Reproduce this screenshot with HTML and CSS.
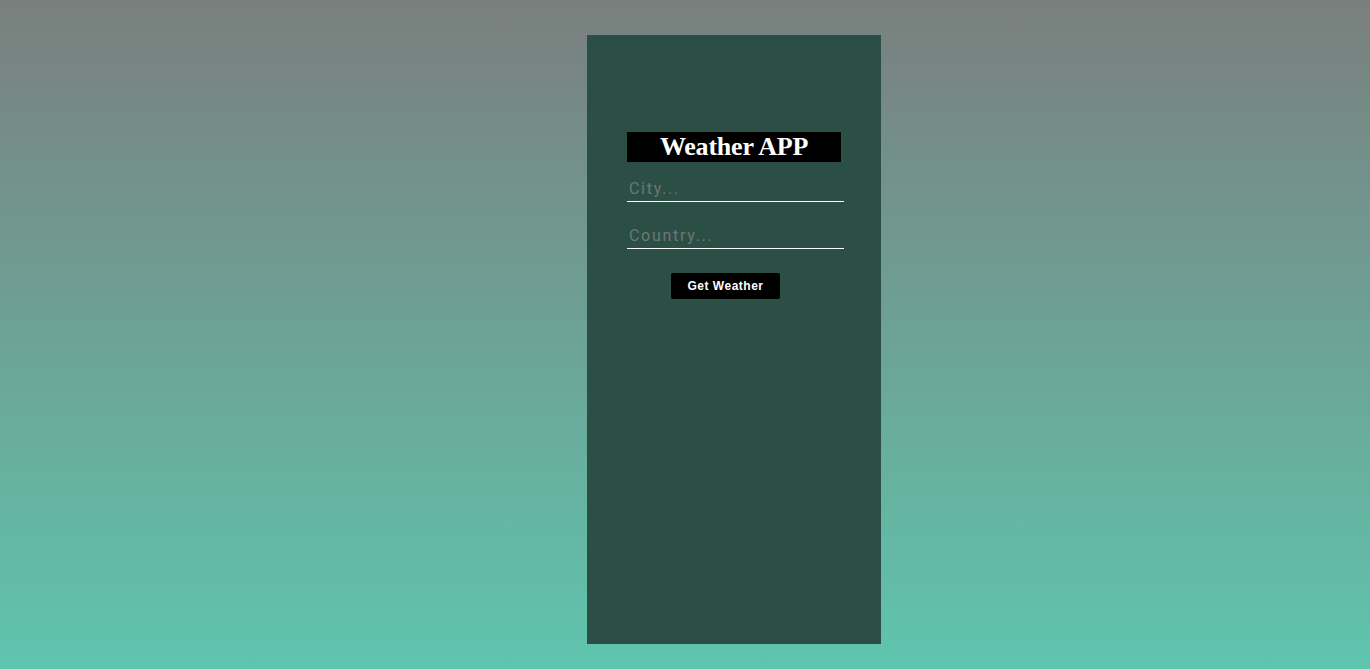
FILE: index.html
```html
<!DOCTYPE html>
<html>
<head>
<meta charset="utf-8">
<title>Weather APP</title>
<link rel="stylesheet" href="styles.css">
</head>
<body>
<div class="page">
  <div class="card">
    <h1 class="title">Weather APP</h1>
    <form class="form">
      <input class="field" type="text" placeholder="City...">
      <input class="field" type="text" placeholder="Country...">
      <button class="btn" type="button">Get Weather</button>
    </form>
  </div>
</div>
</body>
</html>
```
FILE: styles.css
```css
html, body {
  margin: 0;
  padding: 0;
}
body {
  height: 669px;
  background: linear-gradient(to bottom, #7a7f7e 0%, #5fc5ae 100%);
  font-family: "Liberation Sans", Arial, sans-serif;
  overflow: hidden;
}
.page {
  display: flex;
  padding-top: 35px;
  padding-left: 587px;
}
.card {
  width: 294px;
  height: 609px;
  background: #2b4f45;
  box-sizing: border-box;
  padding: 97px 37px 0 40px;
}
.title {
  margin: 0;
  width: 214px;
  height: 30px;
  background: #000;
  color: #fff;
  font-family: "Liberation Serif", "Times New Roman", serif;
  font-size: 26px;
  font-weight: bold;
  line-height: 30px;
  text-align: center;
  letter-spacing: -0.2px;
}
.form {
  display: flex;
  flex-direction: column;
  margin-top: 16px;
}
.field {
  width: 217px;
  box-sizing: border-box;
  height: 24px;
  background: transparent;
  border: none;
  border-bottom: 1px solid #ffffff;
  outline: none;
  padding: 0 2px 2px;
  font-family: Roboto, "Liberation Sans", Arial, sans-serif;
  font-size: 16px;
  letter-spacing: 1.7px;
  color: #fff;
  margin-bottom: 23px;
}
.field::placeholder {
  color: #6b7873;
}
.btn {
  align-self: flex-start;
  margin-left: 44px;
  margin-top: 1px;
  width: 109px;
  height: 26px;
  background: #000;
  color: #fff;
  border: none;
  border-radius: 2px;
  font-family: "Liberation Sans", Arial, sans-serif;
  font-size: 12px;
  font-weight: bold;
  letter-spacing: 0.5px;
  padding: 0;
  cursor: pointer;
}
```
